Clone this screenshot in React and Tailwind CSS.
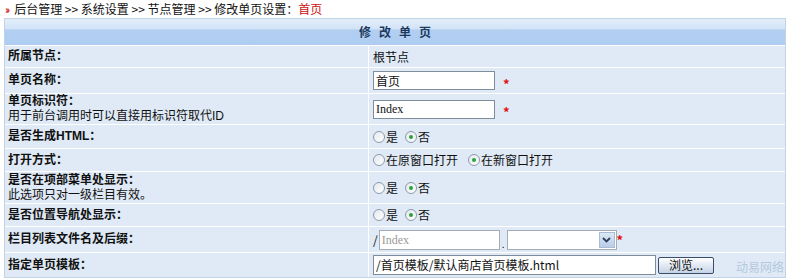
import React from 'react'

const cjk = { fontFamily: '"Noto Sans CJK SC", "Liberation Sans", sans-serif' }
const labelFont = { fontFamily: '"Liberation Sans", "Noto Sans CJK SC", sans-serif' }

function Radio({ checked, label }) {
  return (
    <span className="inline-flex items-center">
      <span className="w-[12px] h-[12px] rounded-full border border-[#8a9aac] bg-gradient-to-br from-[#e4e8ee] to-white flex items-center justify-center mr-[1px]">
        {checked && <span className="w-[4px] h-[4px] rounded-full bg-[#2aa33a]" />}
      </span>
      <span>{label}</span>
    </span>
  )
}

function Row({ label, sub, h, children }) {
  return (
    <div className={`grid grid-cols-[364px_1fr] border-t border-white ${h}`}>
      <div className="pl-[3px] flex flex-col justify-center border-r border-white" style={labelFont}>
        <div className="font-bold text-[12px] leading-[15px] text-[#111]">{label}</div>
        {sub && <div className="text-[12px] leading-[15px] text-[#111]">{sub}</div>}
      </div>
      <div className="pl-[4px] flex items-center text-[12px] text-[#111]">{children}</div>
    </div>
  )
}

function Star() {
  return <span className="text-[#e01010] text-[13px] font-bold ml-[8px] mt-[6px]">*</span>
}

export default function App() {
  return (
    <div className="w-[790px] h-[278px] bg-white overflow-hidden relative" style={cjk}>
      {/* breadcrumb */}
      <div className="h-[18px] flex items-center pl-[5px] text-[12px] text-[#111]">
        <span className="text-[#d01010] font-bold text-[11px] mr-[6px] tracking-[-2px]">››</span>
        <span>后台管理 &gt;&gt; 系统设置 &gt;&gt; 节点管理 &gt;&gt; 修改单页设置：</span>
        <span className="text-[#d01010]">首页</span>
      </div>

      <div className="ml-[4px] w-[782px] border border-[#c3d3e6] bg-[#dfeaf6]">
        <div className="h-[26px] bg-[linear-gradient(#e4eefa_0%,#d2e3f7_38%,#b2cff2_42%,#aecdf1_100%)] flex items-center justify-center">
          <span className="font-bold text-[12px] tracking-[8px] text-[#1d3a5e] pl-[8px]">修改单页</span>
        </div>

        <Row label="所属节点：" h="h-[22px]">
          <span>根节点</span>
        </Row>

        <Row label="单页名称：" h="h-[26px]">
          <span className="w-[122px] h-[19px] border border-[#7f8c99] bg-white flex items-center pl-[2px]">首页</span>
          <Star />
        </Row>

        <Row label="单页标识符：" sub="用于前台调用时可以直接用标识符取代ID" h="h-[31px]">
          <span className="w-[122px] h-[19px] border border-[#7f8c99] bg-white flex items-center pl-[2px]" style={{ fontFamily: '"Liberation Serif", serif' }}>Index</span>
          <Star />
        </Row>

        <Row label="是否生成HTML：" h="h-[24px]">
          <span className="flex gap-[7px]"><Radio label="是" /><Radio checked label="否" /></span>
        </Row>

        <Row label="打开方式：" h="h-[23px]">
          <span className="flex gap-[10px]"><Radio label="在原窗口打开" /><Radio checked label="在新窗口打开" /></span>
        </Row>

        <Row label="是否在项部菜单处显示：" sub="此选项只对一级栏目有效。" h="h-[32px]">
          <span className="flex gap-[7px]"><Radio label="是" /><Radio checked label="否" /></span>
        </Row>

        <Row label="是否位置导航处显示：" h="h-[23px]">
          <span className="flex gap-[7px]"><Radio label="是" /><Radio checked label="否" /></span>
        </Row>

        <Row label="栏目列表文件名及后缀：" h="h-[26px]">
          <span className="mr-[1px]">/</span>
          <span className="w-[121px] h-[20px] border border-[#a5acb5] bg-white flex items-center pl-[2px] text-[#9a9a9a]" style={{ fontFamily: '"Liberation Serif", serif' }}>Index</span>
          <span className="mx-[2px] mt-[8px] text-[10px]">.</span>
          <span className="w-[110px] h-[20px] border border-[#a5acb5] bg-white flex justify-end p-[1px]">
            <span className="w-[16px] h-full bg-gradient-to-b from-[#dde8f6] to-[#b8cdea] border border-[#aabbd6] flex items-center justify-center">
              <svg width="9" height="6" viewBox="0 0 9 6"><path d="M1 1 L4.5 4.5 L8 1" stroke="#2d3e5a" strokeWidth="1.8" fill="none" /></svg>
            </span>
          </span>
          <span className="text-[#e01010] text-[13px] font-bold">*</span>
        </Row>

        <Row label="指定单页模板：" h="h-[25px]">
          <span className="w-[283px] h-[20px] border border-[#7f8c99] bg-white flex items-center pl-[2px]">/首页模板/默认商店首页模板.html</span>
          <span className="ml-[2px] w-[56px] h-[17px] border border-[#3a4d6b] rounded-[2px] bg-gradient-to-b from-white to-[#c5d3e6] flex items-center justify-center text-[12px]">浏览...</span>
        </Row>
      </div>

      <span className="absolute right-[6px] bottom-[2px] text-[12px] text-[#b6c8dc]">动易网络</span>
    </div>
  )
}
